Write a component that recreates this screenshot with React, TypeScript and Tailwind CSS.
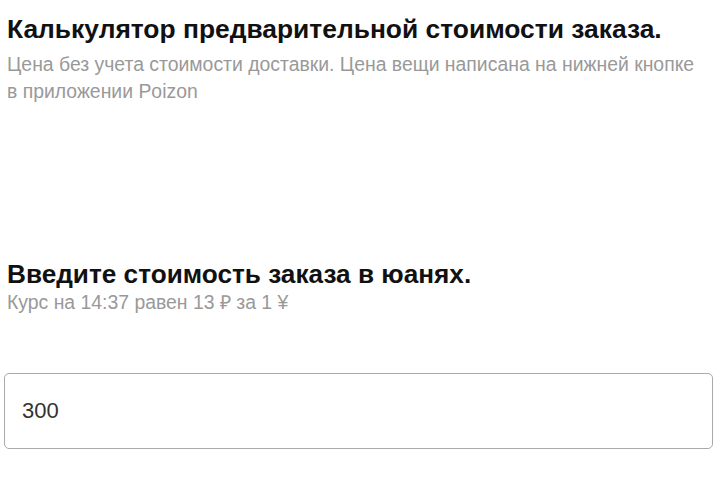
import React, { useState } from "react";

const font = { fontFamily: '"Liberation Sans", Arial, sans-serif' };

export default function App() {
  const [value, setValue] = useState("300");

  return (
    <div className="w-[720px] h-[480px] bg-white overflow-hidden" style={font}>
      <div className="pl-[7px] pr-[15px] pt-[14px]">
        <h1 className="text-[26.4px] leading-[30px] font-bold text-[#111]">Калькулятор предварительной стоимости заказа.</h1>
        <p className="mt-[7px] text-[19.4px] leading-[27px] text-[#999]">
          Цена без учета стоимости доставки. Цена вещи написана на нижней кнопке в приложении Poizon
        </p>
      </div>

      <div className="px-[7px] mt-[154px]">
        <h2 className="text-[26.2px] leading-[30px] font-bold text-[#111]">Введите стоимость заказа в юанях.</h2>
        <p className="mt-[2px] text-[19.4px] leading-[22px] text-[#999]">Курс на 14:37 равен 13 ₽ за 1 ¥</p>
      </div>

      <div className="pl-[4px] mt-[60px] w-[713px]">
        <input
          value={value}
          onChange={(e) => setValue(e.target.value)}
          className="w-full h-[76px] rounded-[5px] border border-[#aaa] px-[17px] text-[22px] text-[#333] outline-none"
        />
      </div>
    </div>
  );
}
